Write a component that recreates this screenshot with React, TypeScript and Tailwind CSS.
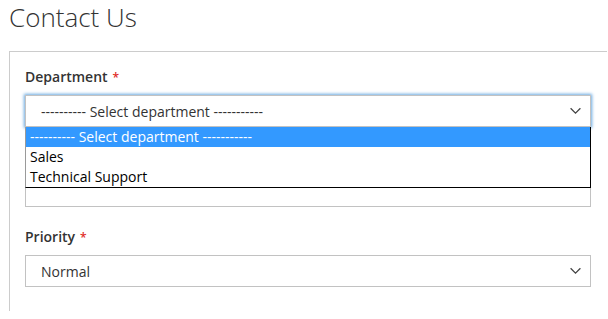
const Chevron = () => (
  <svg width="11" height="7" viewBox="0 0 11 7" className="absolute right-[9px] top-1/2 -translate-y-1/2">
    <path d="M0.6 0.8 L5.5 5.6 L10.4 0.8" fill="none" stroke="#444" strokeWidth="1.3" />
  </svg>
);

const Label = ({ text }: { text: string }) => (
  <div className="mb-[8px] h-[20px] text-[14px] font-semibold leading-[20px] text-[#333]">
    {text}
    <span className="ml-[5px] text-[12px] leading-none text-[#e02b27]">*</span>
  </div>
);

const options = ["---------- Select department -----------", "Sales", "Technical Support"];

export default function App() {
  return (
    <div className="min-h-[319px] bg-white pl-[9px] pr-[1px] font-['Open_Sans',sans-serif] text-[#333]">
      <h1 className="mb-[16px] text-[26px] font-light leading-[35px] text-[#333]">Contact Us</h1>

      <div className="border-l border-t border-[#cccccc] pb-[24px] pl-[15px] pr-[16px] pt-[15px]">
        {/* department, open */}
        <div className="mb-[20px]">
          <Label text="Department" />
          <div className="relative">
            <div className="relative flex h-[32px] items-center border border-[#c2c2c2] bg-white pl-[15px] text-[14px] text-[#333] shadow-[0_0_3px_1px_#68a8e0]">
              ---------- Select department -----------
              <Chevron />
            </div>
            <div className="absolute left-0 right-0 top-[32px] z-10 border-b border-l border-r border-b-black border-l-[#9a9a9a] border-r-black bg-white">
              {options.map((o, i) => (
                <div
                  key={o}
                  className={
                    i === 0
                      ? "h-[20px] bg-[#3399ff] pl-[4px] text-[14px] leading-[20px] text-white"
                      : "h-[20px] pl-[4px] text-[14px] leading-[20px] text-black"
                  }
                >
                  {o}
                </div>
              ))}
            </div>
          </div>
        </div>

        {/* field hidden under the open list */}
        <div className="mb-[20px]">
          <div className="mb-[8px] h-[20px]" />
          <div className="h-[32px] border border-[#c2c2c2] bg-white" />
        </div>

        <div>
          <Label text="Priority" />
          <div className="relative flex h-[32px] items-center border border-[#c2c2c2] bg-white pl-[15px] text-[14px] text-[#333]">
            Normal
            <Chevron />
          </div>
        </div>
      </div>
    </div>
  );
}
